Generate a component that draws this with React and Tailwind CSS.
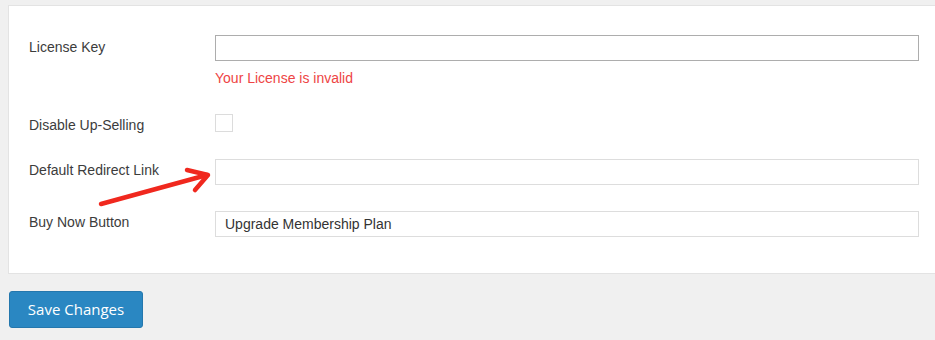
import React from 'react';

const font = { fontFamily: '"Liberation Sans", Arial, sans-serif' };

const Row = ({ label, labelOffset = 'mt-[1px]', children }) => (
  <div className="flex items-start">
    <div className={`w-[186px] shrink-0 text-[14px] leading-5 text-[#3c3c3c] ${labelOffset}`}>{label}</div>
    <div className="flex-1">{children}</div>
  </div>
);

const Arrow = () => (
  <svg className="absolute left-0 top-0 pointer-events-none" width="935" height="340" viewBox="0 0 935 340">
    <g stroke="#f0281e" strokeWidth="4.5" strokeLinecap="round" strokeLinejoin="round" fill="none">
      <line x1="101" y1="204" x2="207" y2="175" />
      <polyline points="187,170 208,175 195,190" />
    </g>
  </svg>
);

export default function App() {
  return (
    <div className="relative w-[935px] h-[340px] overflow-hidden bg-[#f0f0f0]" style={font}>
      <div className="pl-[8px] pt-[5px]">
        <div className="w-[940px] bg-white border border-[#e3e3e3] pl-[20px] pt-[29px] pb-[36px]">
          <Row label="License Key" labelOffset="mt-[2px]">
            <input className="block w-[704px] h-[26px] border border-[#adadad] bg-white outline-none" />
            <p className="mt-[7px] text-[14px] leading-5 text-[#ee4444]">Your License is invalid</p>
          </Row>
          <div className="mt-[26px]">
            <Row label="Disable Up-Selling" labelOffset="mt-[1px]">
              <div className="w-[18px] h-[18px] border border-[#dcdcdc] bg-white" />
            </Row>
          </div>
          <div className="mt-[24px]">
            <Row label="Default Redirect Link" labelOffset="mt-[1px]">
              <input className="block w-[704px] h-[26px] border border-[#dddddd] bg-white outline-none" />
            </Row>
          </div>
          <div className="mt-[26px]">
            <Row label="Buy Now Button" labelOffset="mt-[1px]">
              <input
                defaultValue="Upgrade Membership Plan"
                className="block w-[704px] h-[26px] border border-[#dddddd] bg-white px-[9px] text-[14px] text-[#333] outline-none"
                style={font}
              />
            </Row>
          </div>
        </div>
      </div>
      <div className="pl-[9px] mt-[17px]">
        <button
          className="w-[134px] h-[37px] rounded-[3px] bg-[#2a87c2] border border-[#2477ad] text-white text-[15px]"
          style={{ fontFamily: '"Open Sans", "Noto Sans", sans-serif' }}
        >
          Save Changes
        </button>
      </div>
      <Arrow />
    </div>
  );
}
